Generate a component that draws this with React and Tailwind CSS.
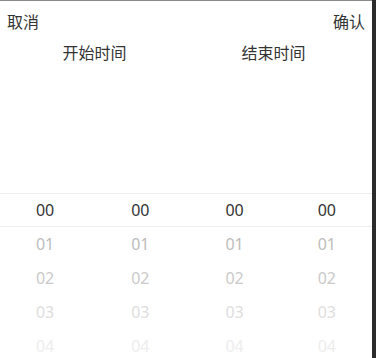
const columns = [0, 1, 2, 3];
const values = ["00", "01", "02", "03", "04"];
const tones = ["text-[#333333]", "text-[#bdbdbd]", "text-[#cacaca]", "text-[#dedede]", "text-[#ededed]"];

const PickerColumn = ({ index }) => (
    <div className={`flex-1 flex flex-col ${index === 0 ? "pr-[5px]" : index === 1 ? "pr-[4px]" : index === 2 ? "pr-[2px]" : ""}`}>
        {values.map((v, i) => (
            <div
                key={v}
                className={`h-[34px] shrink-0 flex items-center justify-center text-[16px] ${tones[i]}`}
            >
                {v}
            </div>
        ))}
    </div>
);

export default function App() {
    return (
        <div className="w-[376px] h-[358px] flex bg-[#2b2b2b] overflow-hidden" style={{ fontFamily: '"Noto Sans", "Noto Sans CJK SC", sans-serif' }}>
            <div className="w-[372px] h-full bg-white border-t border-[#8a8a8a] flex flex-col overflow-hidden">
                {/* Header */}
                <div className="h-[42px] shrink-0 px-[7px] flex items-center justify-between text-[16px] text-[#333333]">
                    <span>取消</span>
                    <span>确认</span>
                </div>
                <div className="h-[20px] shrink-0 pl-[5px] pr-[9px] grid grid-cols-2 text-[16px] leading-[20px] text-[#333333]">
                    <div className="text-center">开始时间</div>
                    <div className="text-center">结束时间</div>
                </div>

                {/* Picker */}
                <div className="mt-[130px] shrink-0 flex relative">
                    {columns.map((c) => (
                        <PickerColumn key={c} index={c} />
                    ))}
                    <div className="absolute left-0 right-0 top-0 h-[34px] border-y border-[#ededed] pointer-events-none" />
                </div>
            </div>
        </div>
    );
}
